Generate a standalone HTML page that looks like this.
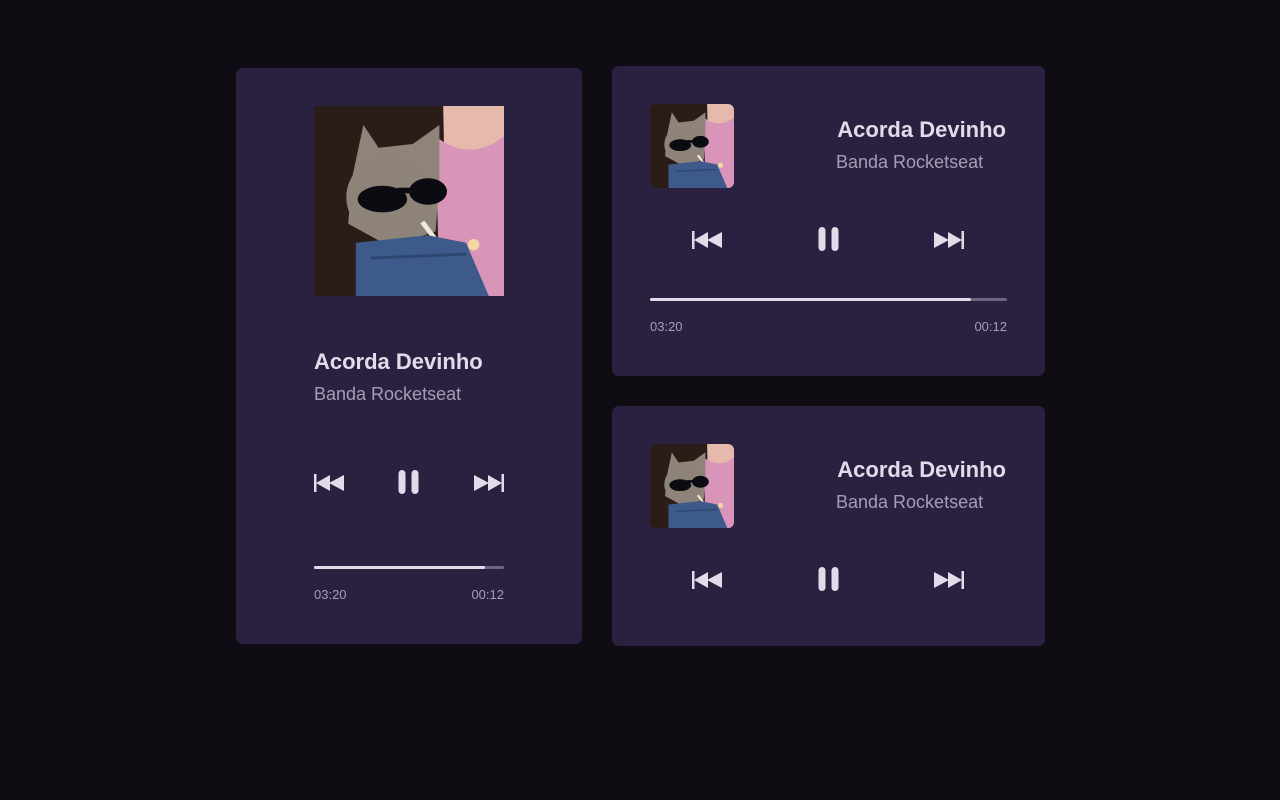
<!DOCTYPE html>
<html><head><meta charset="utf-8"><style>
*{margin:0;padding:0;box-sizing:border-box}
body{width:1280px;height:800px;background:#0f0d13;font-family:"Liberation Sans",Roboto,sans-serif;position:relative;overflow:hidden}
.card{position:absolute;background:#2a2141;border-radius:7px}
.art{position:absolute;overflow:hidden}
.t{position:absolute;color:#e1dcea;font-weight:bold;font-size:22px;white-space:nowrap;line-height:1}
.s{position:absolute;color:#a39eb6;font-size:18px;white-space:nowrap;line-height:1}
.tm{position:absolute;color:#a39eb6;font-size:13px;line-height:1}
.bar{position:absolute;height:3px;background:#6c6480;border-radius:2px}
.bar i{display:block;height:3px;background:#e1dcea;border-radius:2px}
svg.ic{position:absolute}
</style></head><body>
<svg width="0" height="0" style="position:absolute">
<defs>
<symbol id="cat" viewBox="0 0 100 100">
<rect width="100" height="100" fill="#2a1c16"/>
<path d="M68 0H100V100H70Z" fill="#e6b9ad"/>
<path d="M64 16Q82 30 100 16V100H66Z" fill="#d994b9"/>
<circle cx="84" cy="73" r="3" fill="#f0d8a0"/>
<path d="M20 38L26 10 34 22 52 20 66 10 66 40 64 66 40 74 18 62Z" fill="#8e8479"/>
<ellipse cx="40" cy="48" rx="23" ry="22" fill="#8d8378"/>
<ellipse cx="36" cy="49" rx="13" ry="7" fill="#0b0b12"/>
<ellipse cx="60" cy="45" rx="10" ry="7" fill="#0b0b12"/>
<rect x="44" y="43" width="10" height="3" fill="#0b0b12"/>
<path d="M57 61L66 73" stroke="#f2ead8" stroke-width="2.5"/>
<path d="M22 72L60 68 80 72 92 100H22Z" fill="#3d5a8a"/>
<path d="M30 80L80 78" stroke="#2d4670" stroke-width="1.5"/>
</symbol>
<symbol id="prev" viewBox="0 0 30 18"><rect x="0" y="0" width="2.5" height="18" fill="#e1dcea"/><path d="M2 9L16 1V17Z M15 9L30 1V17Z" fill="#e1dcea"/></symbol>
<symbol id="next" viewBox="0 0 30 18"><rect x="27.5" y="0" width="2.5" height="18" fill="#e1dcea"/><path d="M0 1L15 9 0 17Z M14 1L28 9 14 17Z" fill="#e1dcea"/></symbol>
<symbol id="pause" viewBox="0 0 20 24"><rect x="0" y="0" width="7" height="24" rx="3.5" fill="#e1dcea"/><rect x="13" y="0" width="7" height="24" rx="3.5" fill="#e1dcea"/></symbol>
</defs></svg>

<div class="card" style="left:236px;top:68px;width:346px;height:576px"></div>
<svg class="art" style="left:314px;top:106px" width="190" height="190"><use href="#cat"/></svg>
<div class="t" style="left:314px;top:351px">Acorda Devinho</div>
<div class="s" style="left:314px;top:385px">Banda Rocketseat</div>
<svg class="ic" style="left:314px;top:474px" width="30" height="18"><use href="#prev"/></svg>
<svg class="ic" style="left:398px;top:470px" width="21" height="24"><use href="#pause"/></svg>
<svg class="ic" style="left:474px;top:474px" width="30" height="18"><use href="#next"/></svg>
<div class="bar" style="left:314px;top:566px;width:190px"><i style="width:171px"></i></div>
<div class="tm" style="left:314px;top:588px">03:20</div>
<div class="tm" style="right:776px;top:588px">00:12</div>

<div class="card" style="left:612px;top:66px;width:433px;height:310px"></div>
<svg class="art" style="left:650px;top:104px;border-radius:6px" width="84" height="84"><use href="#cat"/></svg>
<div class="t" style="right:274px;top:119px">Acorda Devinho</div>
<div class="s" style="left:836px;top:153px">Banda Rocketseat</div>
<svg class="ic" style="left:692px;top:231px" width="30" height="18"><use href="#prev"/></svg>
<svg class="ic" style="left:818px;top:227px" width="21" height="24"><use href="#pause"/></svg>
<svg class="ic" style="left:934px;top:231px" width="30" height="18"><use href="#next"/></svg>
<div class="bar" style="left:650px;top:298px;width:357px"><i style="width:321px"></i></div>
<div class="tm" style="left:650px;top:320px">03:20</div>
<div class="tm" style="right:273px;top:320px">00:12</div>

<div class="card" style="left:612px;top:406px;width:433px;height:240px"></div>
<svg class="art" style="left:650px;top:444px;border-radius:6px" width="84" height="84"><use href="#cat"/></svg>
<div class="t" style="right:274px;top:459px">Acorda Devinho</div>
<div class="s" style="left:836px;top:493px">Banda Rocketseat</div>
<svg class="ic" style="left:692px;top:571px" width="30" height="18"><use href="#prev"/></svg>
<svg class="ic" style="left:818px;top:567px" width="21" height="24"><use href="#pause"/></svg>
<svg class="ic" style="left:934px;top:571px" width="30" height="18"><use href="#next"/></svg>
</body></html>
